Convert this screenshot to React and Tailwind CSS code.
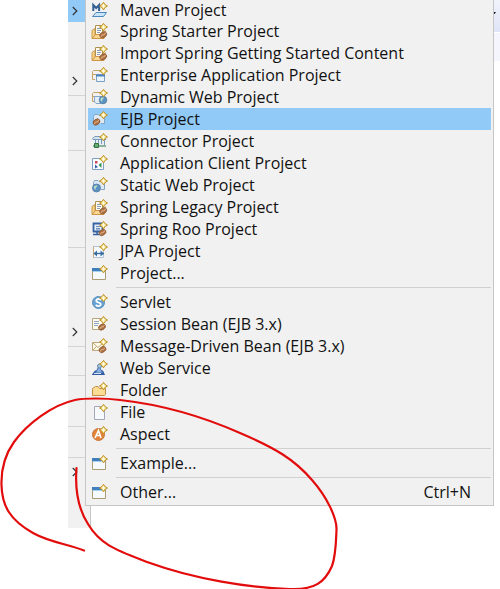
import React from "react";

const Sparkle = () => (
  <g>
    <path
      d="M11.5 .3 L13 2.5 L15.5 4 L13 5.5 L11.5 7.9 L10 5.5 L7.5 4 L10 2.5 Z"
      fill="#f9e384" stroke="#bd912b" strokeWidth="1" strokeLinejoin="round"
    />
    <path d="M11.5 2.2 V5.8 M9.7 4 H13.3" stroke="#fffdf0" strokeWidth="1.1" />
  </g>
);

const Bean = ({ x = 10.5, y = 11.8 }) => (
  <g transform={`translate(${x} ${y}) rotate(-35)`}>
    <ellipse rx="3.7" ry="2.7" fill="#b07446" stroke="#85502c" strokeWidth=".7" />
    <path d="M-3 .4 Q-1 -1.2 0 0 T3.2 -.4" fill="none" stroke="#e6bd94" strokeWidth=".8" />
  </g>
);

const Globe = ({ x, y, r = 3.8 }) => (
  <g>
    <circle cx={x} cy={y} r={r} fill="#5b94c4" stroke="#54799e" strokeWidth=".8" />
    <path d={`M${x - 2.6} ${y - 1.2} q1.6 -1.9 3.4 -1.2 q-.3 1.8 -1.8 2 q.8 1.4 -.2 2.2 q-1.5 -.8 -1.4 -3z`} fill="#c2e2c4" />
  </g>
);

const Frame = () => (
  <path d="M1.5 12 V5.5 L2.5 3.5 H6 L7 4.5 H12.5 V12.5 H9" fill="#dfeaf6" stroke="#84a5c6" />
);

const drawings = {
  maven: (
    <>
      <path d="M.5 14.5 L4 10.5 H14.5 L11.5 14.5 Z" fill="#c9e3f8" stroke="#4d88c0" />
      <path d="M1.3 9 V3 L4.2 6 L7.1 3 V9" fill="none" stroke="#315f94" strokeWidth="2" />
    </>
  ),
  spring: (
    <>
      <path d="M0 15 V7.5 L3 5.5 V12 Z" fill="#f8d48a" stroke="#cf9a49" strokeLinejoin="round" />
      <path d="M3.5 2.5 H10.5 V12 H3.5 Z" fill="#fffaf0" stroke="#b09050" />
      <path d="M5 5.5 H9 M5 7.5 H9 M5 9.5 H8" stroke="#8c9bb8" />
      <path d="M0 15.5 L3.5 11.5 H14 L12 15.5 Z" fill="#fbd893" stroke="#cf9544" strokeLinejoin="round" />
      <path d="M13.5 7.5 V14" stroke="#d9a757" />
      <Bean x={11.2} y={11.8} />
    </>
  ),
  enterprise: (
    <>
      <path d="M3 12.5 H.5 V4.5 L1.5 3.5 H10 M.5 7.5 H5" fill="none" stroke="#c7a364" />
      <path d="M4.5 7.5 H12.5 V14.5 H4.5 Z" fill="#eaf4fd" stroke="#7c9fc5" />
      <path d="M4 8.5 H13" stroke="#4d84bd" strokeWidth="2" />
    </>
  ),
  dynamic: (
    <>
      <path d="M3 12.5 H.5 V4.5 L1.5 3.5 H10 M.5 7.5 H5" fill="none" stroke="#c7a364" />
      <path d="M2.5 7.5 H9 V14.5 H4 L2.5 13 Z" fill="#e3eefb" stroke="#84a5c6" />
      <Globe x={11} y={11} />
    </>
  ),
  ejb: (
    <>
      <Frame />
      <Bean x={4.5} y={11} />
    </>
  ),
  connector: (
    <>
      <path d="M3.5 5.5 H12.5 V12 H3.5 Z" fill="#e6eff9" />
      <path d="M3.5 10 V6 M12.5 12 V6 M6.5 10 V7 M9.5 11 V7" stroke="#7c9bbb" />
      <path d="M.5 5.5 L3 3.5 H11 L14 6.5 H1 Z" fill="#d6e5f4" stroke="#7c9bbb" />
      <path d="M1 13 H14" stroke="#4a8a59" strokeWidth="1.2" />
      <path d="M2.5 10.5 H6.5 V14.5 H2.5 Z" fill="#6aad74" stroke="#2e7040" />
    </>
  ),
  client: (
    <>
      <path d="M.5 3.5 H11.5 V14.5 H.5 Z" fill="#fbfdff" stroke="#7c9fc5" />
      <path d="M3 6 H5.5 V8.5 H3 Z" fill="#cd4959" />
      <path d="M3 9.5 L6 12 L3 13.5 Z" fill="#3d5dac" />
      <path d="M6.5 10 L9.5 7.5 V13 Z" fill="#3f9355" />
    </>
  ),
  static: (
    <>
      <Frame />
      <Globe x={4.5} y={11} r={4} />
    </>
  ),
  roo: (
    <>
      <path d="M1.5 2.5 H10.5 V10.5 H1.5 Z" fill="#e4edf9" stroke="#3762a1" strokeWidth="1.8" />
      <path d="M4 5.5 H9 M4 7.5 H8 M4 9 H8" stroke="#6b8cb7" />
      <path d="M1 13.5 H9 M5 11 V14" stroke="#3762a1" strokeWidth="1.5" />
      <Bean x={10.5} y={11.5} />
    </>
  ),
  jpa: (
    <>
      <path d="M1.5 3.5 H11.5 V14.5 H1.5 Z" fill="#f7fbff" stroke="#b0c2d6" />
      <path d="M1.5 3.5 V14.5" stroke="#c3aa78" />
      <path d="M2 10.5 H12" stroke="#386d9f" strokeWidth="1.4" />
      <path d="M5 7.5 L1.5 10.5 L5 13.5 Z M8.5 7.5 L12 10.5 L8.5 13.5 Z" fill="#386d9f" />
    </>
  ),
  window: (
    <>
      <path d="M.5 3.5 H13.5 V14.5 H.5 Z" fill="#f6fafd" stroke="#ab9c73" />
      <path d="M0 4.5 H14" stroke="#3f7fbd" strokeWidth="3" />
      <path d="M1 6.5 H13" stroke="#a4d0f2" />
    </>
  ),
  servlet: (
    <>
      <circle cx="6.5" cy="8.5" r="6" fill="#66a3d4" stroke="#588fbe" />
      <path d="M9.3 6 Q7 4 4.7 5.4 Q3.3 7.6 6.5 8.5 Q9.8 9.4 8.3 11.4 Q6.2 13 3.7 11" fill="none" stroke="#fff" strokeWidth="1.8" />
    </>
  ),
  session: (
    <>
      <path d="M.5 2.5 H11.5 V13.5 H.5 Z" fill="#fffdf0" stroke="#b5a67c" />
      <path d="M2 5.5 H7 M2 7.5 H7 M2 9.5 H6" stroke="#92a7c9" />
      <Bean x={10} y={11} />
    </>
  ),
  message: (
    <>
      <path d="M.5 4.5 H11.5 V12.5 H.5 Z" fill="#fffbe8" stroke="#bda779" />
      <path d="M1 5 L6 9.5 L11 5 M1 12 L4.5 8.5" fill="none" stroke="#bda779" />
      <Bean x={10.5} y={11.5} />
    </>
  ),
  service: (
    <>
      <path d="M0 14.5 L3 10.5 H11 L13 15 H0 Z" fill="#2f59a5" />
      <path d="M3.5 13 L7 6 L10.5 13 Z" fill="#86b2de" stroke="#4570b0" />
      <circle cx="7.5" cy="6" r="2" fill="#a6c7e4" stroke="#6186ac" />
      <path d="M2 13.5 H9" stroke="#d5e5f5" />
    </>
  ),
  folder: (
    <path d="M.5 13.5 V6.5 L2 5.5 L3.5 4.5 H6 L7.5 6.5 H13.5 V12.5 L12.5 13.5 Z" fill="#fbdc94" stroke="#c58e43" strokeLinejoin="round" />
  ),
  file: (
    <path d="M2.5 2.5 H9.5 L12.5 5.5 V15.5 H2.5 Z" fill="#f7fafe" stroke="#a3a9b7" />
  ),
  aspect: (
    <>
      <circle cx="6.5" cy="8.5" r="6" fill="#e2833a" stroke="#c97638" />
      <path d="M3 12 L6.5 4.5 L9 12 M4.5 9.5 H8.5" fill="none" stroke="#fff" strokeWidth="1.6" />
    </>
  ),
};

const Icon = ({ name }) => (
  <svg viewBox="0 0 16 16" className="size-4 shrink-0 overflow-visible" aria-hidden="true">
    {drawings[name]}
    <Sparkle />
  </svg>
);

const groups = [
  [
    ["maven", "Maven Project"],
    ["spring", "Spring Starter Project"],
    ["spring", "Import Spring Getting Started Content"],
    ["enterprise", "Enterprise Application Project"],
    ["dynamic", "Dynamic Web Project"],
    ["ejb", "EJB Project"],
    ["connector", "Connector Project"],
    ["client", "Application Client Project"],
    ["static", "Static Web Project"],
    ["spring", "Spring Legacy Project"],
    ["roo", "Spring Roo Project"],
    ["jpa", "JPA Project"],
    ["window", "Project..."],
  ],
  [
    ["servlet", "Servlet"],
    ["session", "Session Bean (EJB 3.x)"],
    ["message", "Message-Driven Bean (EJB 3.x)"],
    ["service", "Web Service"],
    ["folder", "Folder"],
    ["file", "File"],
    ["aspect", "Aspect"],
  ],
  [["window", "Example..."]],
  [["window", "Other...", "Ctrl+N"]],
];

function MenuItem({ icon, label, shortcut }) {
  const active = label === "EJB Project";
  return (
    <button
      type="button"
      role="menuitem"
      className={`flex h-[22px] w-full items-center gap-3 pl-1 pr-5 text-left leading-5 whitespace-nowrap first:h-5 ${active ? "bg-[#91c9f7]" : ""}`}
    >
      <Icon name={icon} />
      <span className="grow">{label}</span>
      {shortcut && <span>{shortcut}</span>}
    </button>
  );
}

function Submenu() {
  return (
    <div
      role="menu"
      className="absolute top-0 right-[6px] left-[85px] border border-t-0 border-[#c6c6c6] bg-[#f1f1f1] px-[2px] pb-[2px]"
    >
      {groups.map((items, g) => (
        <React.Fragment key={g}>
          {g > 0 && <hr className="my-[3px] ml-7 border-[#d0d0d0]" />}
          {items.map(([icon, label, shortcut]) => (
            <MenuItem key={label} icon={icon} label={label} shortcut={shortcut} />
          ))}
        </React.Fragment>
      ))}
    </div>
  );
}

const Chevron = () => (
  <svg viewBox="0 0 6 10" className="h-[10px] w-[6px]" aria-hidden="true">
    <path d="M.8 1 L4.8 5 L.8 9" fill="none" stroke="#333" strokeWidth="1.2" />
  </svg>
);

const ParentRow = ({ active }) => (
  <button
    type="button"
    aria-label="Open submenu"
    className={`flex h-[22px] w-full items-center pl-1 ${active ? "bg-[#91c9f7]" : ""}`}
  >
    <Chevron />
  </button>
);

const Rule = () => <hr className="my-[3px] border-[#d4d4d4]" />;

function ParentMenu() {
  return (
    <div className="ml-[68px] w-[23px] shrink-0 self-start border-r border-[#c6c6c6] bg-[#f1f1f1]">
      <ParentRow active />
      <div className="pt-12"><ParentRow /></div>
      <Rule />
      <div className="h-12" />
      <Rule />
      <div className="h-[90px]" />
      <Rule />
      <div className="pt-[70px]"><ParentRow /></div>
      <Rule />
      <div className="h-[22px]" />
      <Rule />
      <div className="h-11" />
      <Rule />
      <div className="h-6" />
      <Rule />
      <div className="pb-[45px]"><ParentRow /></div>
    </div>
  );
}

export default function App() {
  return (
    <div className="relative flex min-h-screen justify-between overflow-hidden bg-white font-['Open_Sans','Noto_Sans',sans-serif] text-base text-[#111]">
      <ParentMenu />
      <div className="w-[6px] shrink-0">
        <div className="h-8 bg-linear-to-b from-[#f1f3fc] to-[#dfe4f7] pt-3">
          <svg viewBox="0 0 6 3" className="h-[3px] w-[6px]" aria-hidden="true">
            <path d="M0 0 H2 L.5 2 H0 Z" fill="#111" />
          </svg>
        </div>
        <div className="mt-px h-7 bg-[#f5f6fd]" />
      </div>
      <Submenu />
      <svg viewBox="0 0 500 589" className="pointer-events-none absolute top-0 left-0 h-[589px] w-[500px]" aria-hidden="true">
        <path
          d="M76.5 468 C75 488 77 507 88 524 C101 546 119 551 150 563 C194 579 250 588 290 589 C315 590 325 582 332 566 C336 555 336 540 336.5 530 C337 518 327 497 312 480 C294 459 275 448 240 433 C206 418 165 405 120 400 C105 398 85 398 75 400 C52 405 27 424 14 442 C4 456 1 469 1.5 485 C2 506 10 520 33 533 C49 542 67 544 84 550.5"
          fill="none" stroke="#e30c0c" strokeWidth="2.2" strokeLinecap="round"
        />
      </svg>
    </div>
  );
}
